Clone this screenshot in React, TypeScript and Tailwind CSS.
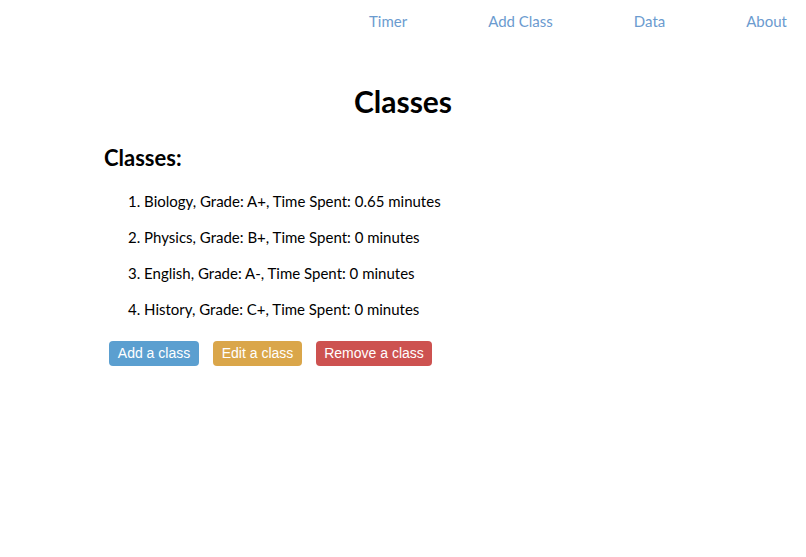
const classes = [
  { name: "Biology", grade: "A+", time: "0.65" },
  { name: "Physics", grade: "B+", time: "0" },
  { name: "English", grade: "A-", time: "0" },
  { name: "History", grade: "C+", time: "0" },
];

const navLinks = ["Timer", "Add Class", "Data", "About"];

export default function App() {
  return (
    <div className="min-h-screen bg-white text-black font-['Lato',sans-serif]">
      <nav className="flex justify-end gap-[81px] pr-[19px] pt-[10px] h-[41px]">
        {navLinks.map((link) => (
          <a key={link} href="#" className="text-[15px] text-[#6b9bcf]">
            {link}
          </a>
        ))}
      </nav>

      <h1 className="mt-[40px] text-center text-[30px] font-bold leading-[40px]">Classes</h1>

      <div className="pl-[104px] mt-[22px]">
        <h2 className="text-[22px] font-bold leading-[30px]">Classes:</h2>
        <ol className="mt-[18px] pl-[24px] space-y-[16px]">
          {classes.map((c, i) => (
            <li key={c.name} className="text-[15px] leading-[20px]">
              {i + 1}. {c.name}, Grade: {c.grade}, Time Spent: {c.time} minutes
            </li>
          ))}
        </ol>
        <div className="mt-[22px] ml-[5px] flex gap-[14px] font-['Liberation_Sans',Arial,sans-serif] text-[14px] text-white">
          <button className="h-[25px] w-[90px] rounded-[4px] bg-[#5b9fd0]">Add a class</button>
          <button className="h-[25px] w-[89px] rounded-[4px] bg-[#daa64a]">Edit a class</button>
          <button className="h-[25px] w-[116px] rounded-[4px] bg-[#cd5250]">Remove a class</button>
        </div>
      </div>
    </div>
  );
}
